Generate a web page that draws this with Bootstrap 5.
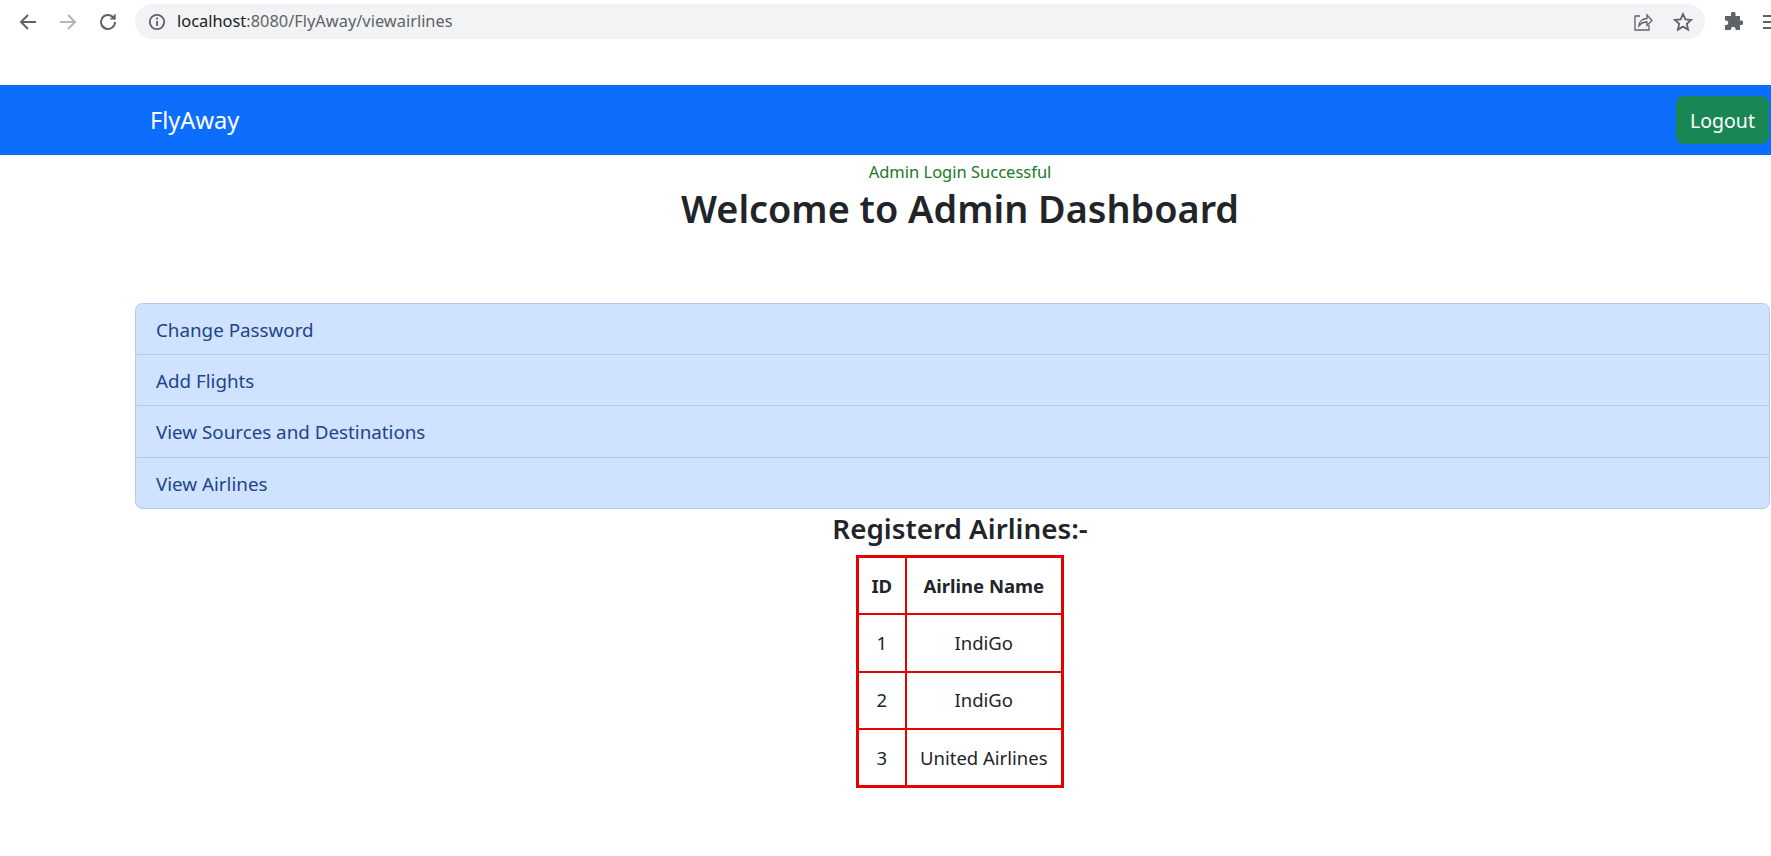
<!DOCTYPE html>
<html lang="en">
<head>
<meta charset="utf-8">
<title>FlyAway</title>
<link rel="stylesheet" href="https://cdn.jsdelivr.net/npm/bootstrap@5.3.0/dist/css/bootstrap.min.css">
<style>
html{font-size:20px;}
body{font-family:"Noto Sans",sans-serif;overflow:hidden;height:856px;}
.chrome-bar{height:85px;padding:4px 0 0 8px;overflow:hidden;}
.chrome-btn{width:40px;height:36px;display:flex;align-items:center;justify-content:center;flex:none;}
.omnibox{width:1570px;height:35px;margin-left:7px;flex:none;background:#f1f3f4;border-radius:18px;padding:0 12px 0 13px;font-size:16.4px;color:#5f6368;}
.omnibox b{font-weight:400;color:#202124;}
.omni-text{margin-left:11px;}
.omni-star{margin-left:20px;}
.puzzle-btn{margin-left:8px;}
.menu-btn{width:18px;justify-content:flex-end;}
.fly-nav{height:70px;padding:0;}
.fly-inner{width:100%;padding:0 2px 0 150px;}
.fly-brand{font-size:23.6px;color:#fff;line-height:1;padding-top:2px !important;}
.logout-btn{height:48px;width:93px;padding:1px 0 0;font-size:19.5px;}
.centered-block{padding-left:149px;}
.login-msg{color:#187a25;font-size:16.5px;line-height:20px;padding-top:7px;}
.dash-title{font-weight:560;font-size:37.8px;line-height:48px;margin:0;height:121px;padding-top:3px;}
.menu-wrap{margin:0 1px 0 135px;}
.menu-wrap .list-group-item{height:51.5px;padding:2px 20px 0;display:flex;align-items:center;font-size:18.8px;color:#224488;border-color:#b6c9e6;}
.reg-title{font-size:27.8px;font-weight:560;line-height:34px;margin:2px 0 10px;}
.air-table{border-collapse:collapse;table-layout:fixed;width:208px;margin:0 auto;border:3px solid #e60000;font-size:18.5px;color:#212529;}
.air-table td,.air-table th{border:2px solid #e60000;text-align:center;height:57.5px;padding:0;}
.air-id{width:48px;}
</style>
</head>
<body>
<div>
  <div class="chrome-bar d-flex">
    <div class="chrome-btn"><svg width="22" height="22" viewBox="0 0 22 22" fill="none" stroke="#5f6368" stroke-width="2"><path d="M19 11H4M11 4l-7 7 7 7"/></svg></div>
    <div class="chrome-btn"><svg width="22" height="22" viewBox="0 0 22 22" fill="none" stroke="#b4b6b8" stroke-width="2"><path d="M3 11h15M11 4l7 7-7 7"/></svg></div>
    <div class="chrome-btn"><svg width="22" height="22" viewBox="0 0 22 22" fill="none" stroke="#5f6368" stroke-width="2"><path d="M18 11a7 7 0 1 1-2.2-5.1L18 8"/><path d="M18.6 2.5V8.6H12.5" fill="#5f6368" stroke="none"/></svg></div>
    <div class="omnibox d-flex align-items-center">
      <svg width="18" height="18" viewBox="0 0 18 18" fill="none" stroke="#5f6368" stroke-width="1.8"><circle cx="9" cy="9" r="7.2"/><path d="M9 8v5M9 4.5v2"/></svg>
      <span class="omni-text"><b>localhost</b>:8080/FlyAway/viewairlines</span>
      <svg class="ms-auto" width="20" height="20" viewBox="0 0 20 20" fill="none" stroke="#5f6368" stroke-width="1.3"><path d="M7 4H2v14h14v-5"/><path d="M6 14c0-5 4-7.5 8-7.5V3l5 5.500-5 5V10c-4 0-6 1-8 4z"/></svg>
      <svg class="omni-star" width="20" height="20" viewBox="0 0 20 20" fill="none" stroke="#5f6368" stroke-width="1.8"><path d="M10 2l2.400 5.400 5.800.6-4.400 3.900 1.300 5.700L10 14.600l-5.100 3 1.300-5.700L1.800 8l5.800-.6z"/></svg>
    </div>
    <div class="chrome-btn puzzle-btn"><svg width="20" height="20" viewBox="0 0 20 20" fill="#5f6368"><path d="M8 1.500a2.300 2.300 0 0 1 4.500 0V4H17v4.600h1.500a2.300 2.300 0 0 1 0 4.500H17V18h-4.500v-1.500a2.300 2.300 0 0 0-4.500 0V18H2v-5h1.500a2.300 2.300 0 0 0 0-4.500H2V4h6z"/></svg></div>
    <div class="chrome-btn menu-btn"><svg width="8" height="18" viewBox="0 0 8 18" fill="#5f6368"><rect y="2" width="8" height="2"/><rect y="8" width="8" height="2"/><rect y="14" width="8" height="2"/></svg></div>
  </div>
  <nav class="navbar fly-nav bg-primary">
    <div class="fly-inner d-flex align-items-center justify-content-between">
      <a class="navbar-brand fly-brand m-0 p-0" href="#">FlyAway</a>
      <button class="btn btn-success logout-btn" type="button">Logout</button>
    </div>
  </nav>
  <div class="centered-block">
    <div class="text-center login-msg">Admin Login Successful</div>
    <h1 class="text-center dash-title">Welcome to Admin Dashboard</h1>
  </div>
  <div class="menu-wrap">
    <ul class="list-group">
      <li class="list-group-item list-group-item-primary">Change Password</li>
      <li class="list-group-item list-group-item-primary">Add Flights</li>
      <li class="list-group-item list-group-item-primary">View Sources and Destinations</li>
      <li class="list-group-item list-group-item-primary">View Airlines</li>
    </ul>
  </div>
  <div class="centered-block">
    <h3 class="text-center reg-title">Registerd Airlines:-</h3>
    <table class="air-table">
      <tr><th class="air-id">ID</th><th>Airline Name</th></tr>
      <tr><td>1</td><td>IndiGo</td></tr>
      <tr><td>2</td><td>IndiGo</td></tr>
      <tr><td>3</td><td>United Airlines</td></tr>
    </table>
  </div>
</div>
</body>
</html>
